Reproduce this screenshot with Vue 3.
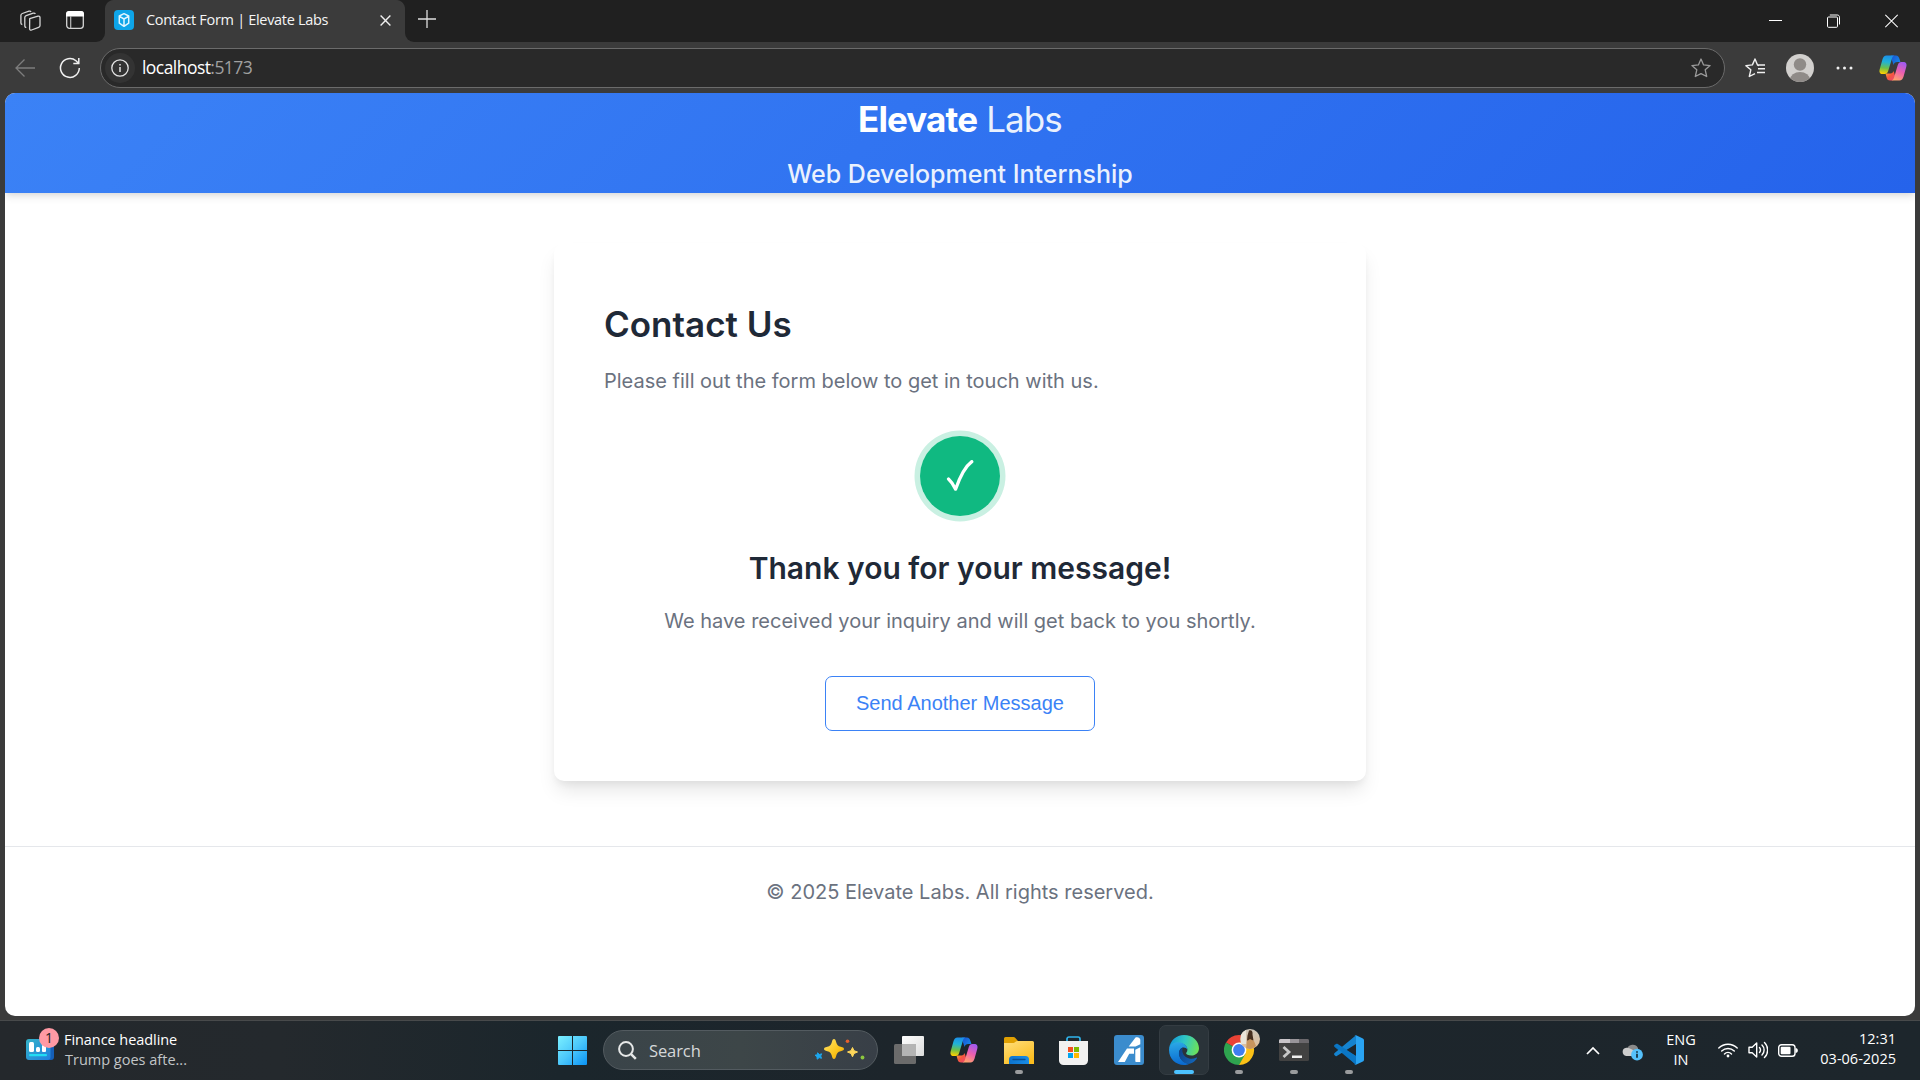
<script setup>
import { h } from 'vue'

const tray = { lang: ['ENG', 'IN'], clock: ['12:31', '03-06-2025'] }

const CopilotIcon = (props) => {
  const id = props.uid
  const stop = (offset, color) => h('stop', { offset, 'stop-color': color })
  const grad = (name, x1, y1, x2, y2, stops) =>
    h('linearGradient', { id: id + name, x1, y1, x2, y2 }, stops.map((s) => stop(s[0], s[1])))
  return h('svg', { width: 28, height: 26, viewBox: '0 0 28 26' }, [
    h('defs', [
      grad('a', 0.5, 0, 0.4, 1, [[0, '#1c8fe8'], [0.35, '#20b2d8'], [0.68, '#6cc04a'], [1, '#ffd000']]),
      grad('b', 0, 0, 1, 0.6, [[0, '#1b4fd0'], [1, '#1687e8']]),
      grad('c', 0.7, 0, 0.3, 1, [[0, '#a05af0'], [0.5, '#ec5fae'], [1, '#ffa36b']]),
      grad('d', 0, 0, 1, 1, [[0, '#ffb13a'], [0.5, '#f4553f'], [1, '#e8467c']])
    ]),
    h('path', { d: 'M12 .5h4.8c2.2 0 3 1.3 3.6 3.2l1 3.4h-3.2c-2 0-3 1-3.6 2.8L12.500 4z', fill: `url(#${id}b)` }),
    h('path', { d: 'M6.500 18.500h5c1.600 0 2.600-.9 3.100-2.500l1.900 6c-.7 2.300-1.600 3.500-3.700 3.500h-1.700c-2.200 0-3-1.300-3.500-3.100z', fill: `url(#${id}d)` }),
    h('path', { d: 'M7.500.5h8c-1.600.4-2.200 1.800-2.700 3.500l-3.600 12c-.6 1.900-1.700 3-3.500 3H3.600C.7 19 0 16.800.7 14.200L3.500 4.300C4.200 1.900 5.400.5 7.500.5z', fill: `url(#${id}a)` }),
    h('path', { d: 'M20.500 25.500h-8c1.600-.4 2.200-1.800 2.700-3.500l3.600-12c.6-1.900 1.700-3 3.500-3h2.100c2.900 0 3.600 2.200 2.900 4.800l-2.800 9.900c-.7 2.400-1.900 3.800-4 3.800z', fill: `url(#${id}c)` })
  ])
}
CopilotIcon.props = ['uid']
</script>

<template>
  <div class="screen">
    <div class="titlebar">
      <div class="corner">
        <svg class="ws" width="22" height="22" viewBox="0 0 22 22" fill="none" stroke="#d6d6d6" stroke-width="1.300" stroke-linejoin="round">
          <path d="M9.700 8.600 18 6.200c1.100-.3 2 .2 2 1.400v7.800c0 1-.5 1.600-1.400 1.900l-7 2.700c-1.100.4-2-.1-2-1.300z" />
          <path d="M6.300 17.300c-1 .1-1.500-.5-1.500-1.500V7.600c0-1 .5-1.600 1.400-1.900l7-2.500c1-.3 1.700-.1 2.200.7" />
          <path d="M2.300 14.500c-.9 0-1.400-.5-1.400-1.400V5.300c0-1 .5-1.500 1.400-1.800L9 1.200c1-.3 1.700 0 2.100.6" />
        </svg>
        <svg class="tabs-ic" width="18" height="18" viewBox="0 0 18 18">
          <rect x=".7" y=".7" width="16.600" height="16.600" rx="2.800" fill="none" stroke="#d6d6d6" stroke-width="1.300" />
          <path d="M0 5.500V3a3 3 0 0 1 3-3h12a3 3 0 0 1 3 3v2.500z" fill="#fff" />
          <path d="M4.700 5v12" stroke="#bbb" stroke-width="1.200" />
        </svg>
      </div>
      <div class="tab">
        <svg width="20" height="20" viewBox="0 0 20 20">
          <rect width="20" height="20" rx="4" fill="#0ea5e9" />
          <path d="M10 3.700 14.700 6v7.200L10 16.300l-4.700-3.100V6zM5.500 6.300 10 9l4.500-2.700M10 9v7" fill="none" stroke="#dff5ff" stroke-width="1.500" stroke-linejoin="round" />
        </svg>
        <span class="tab-title">Contact Form | Elevate Labs</span>
        <svg class="tab-x" width="11" height="11" viewBox="0 0 11 11"><path d="M.6.6l9.800 9.800M10.400.6.600 10.400" stroke="#f0f0f0" stroke-width="1.400" /></svg>
      </div>
      <svg class="plus" width="18" height="18" viewBox="0 0 18 18"><path d="M9 0v18M0 9h18" stroke="#dedede" stroke-width="1.300" /></svg>
      <div class="winctl">
        <svg width="13" height="14" viewBox="0 0 13 14"><path d="M0 6.500h13" stroke="#fff" /></svg>
        <svg width="13" height="14" viewBox="0 0 13 14" fill="none" stroke="#fff"><rect x=".5" y="3" width="10" height="10.300" rx="1" /><path d="M2.800 1h7.500c1.300 0 2.200.9 2.200 2.200v7.300" /></svg>
        <svg width="13" height="14" viewBox="0 0 13 14"><path d="M.3.800l12.400 12.400M12.700.800.3 13.200" stroke="#fff" stroke-width="1.100" /></svg>
      </div>
    </div>

    <div class="toolbar">
      <svg class="back" width="20" height="18" viewBox="0 0 20 18" fill="none" stroke="#7d7d7d" stroke-width="1.300"><path d="M20 9H1M9.500.5 1 9l8.500 8.500" /></svg>
      <svg class="reload" width="22" height="22" viewBox="0 0 22 22" fill="none" stroke="#f0f0f0" stroke-width="1.500"><path d="M20.300 11a9.400 9.400 0 1 1-3.300-7.200l2.500 2.400M19.800 1v5.500h-5.500" /></svg>
      <div class="address">
        <span class="info">
          <svg width="18" height="18" viewBox="0 0 18 18" fill="none" stroke="#e4e4e4" stroke-width="1.300"><circle cx="9" cy="9" r="8.200" /><path d="M9 8v5M9 5v1.500" stroke-width="1.500" /></svg>
        </span>
        <span class="url">localhost<i>:5173</i></span>
        <svg class="star" width="20" height="20" viewBox="0 0 20 20" fill="none" stroke="#9b9b9b" stroke-width="1.300" stroke-linejoin="round"><path d="M10 1l2.600 5.900 6.500.7-4.900 4.200 1.500 6.700L10 15.600l-5.700 2.900 1.500-6.700L.9 7.600l6.500-.7z" /></svg>
      </div>
      <svg class="fav" width="20" height="20" viewBox="0 0 20 20" fill="none" stroke="#f0f0f0" stroke-width="1.400" stroke-linejoin="round"><path d="M14 7.500 12.500 7 10 1 7.400 6.900.9 7.600l4.900 4.200-1.500 6.700 5.700-2.900M12.500 7H20M13 10.800h7M12 14.500h8" /></svg>
      <svg class="avatar" width="28" height="28" viewBox="0 0 28 28"><defs><clipPath id="av"><circle cx="14" cy="14" r="14" /></clipPath></defs><circle cx="14" cy="14" r="14" fill="#d2d0ce" /><circle cx="14" cy="10.500" r="6.200" fill="#8f8b88" /><ellipse cx="14" cy="26" rx="10" ry="8" fill="#8f8b88" clip-path="url(#av)" /></svg>
      <svg class="dots" width="17" height="4" viewBox="0 0 17 4" fill="#f0f0f0"><circle cx="2" cy="2" r="1.500" /><circle cx="8.500" cy="2" r="1.500" /><circle cx="15" cy="2" r="1.500" /></svg>
      <CopilotIcon uid="cpt" />
    </div>

    <div class="page">
      <header class="site-head">
        <h1><b>Elevate</b> <span>Labs</span></h1>
        <p>Web Development Internship</p>
      </header>
      <main class="card">
        <h2>Contact Us</h2>
        <p class="lead">Please fill out the form below to get in touch with us.</p>
        <div class="ok">
          <svg width="28" height="32" viewBox="0 0 28 32" fill="none" stroke="#fff" stroke-width="3.200" stroke-linecap="round" stroke-linejoin="round"><path d="M2.500 19c2.800 2.500 5 5.700 7.100 10.200C14 16.500 18.500 7 25.800 1.600" /></svg>
        </div>
        <h3>Thank you for your message!</h3>
        <p class="sub">We have received your inquiry and will get back to you shortly.</p>
        <button>Send Another Message</button>
      </main>
      <footer>© 2025 Elevate Labs. All rights reserved.</footer>
    </div>

    <div class="taskbar">
      <div class="news">
        <div class="news-ic">
          <svg width="28" height="21" viewBox="0 0 28 21">
            <defs><linearGradient id="nw" x2="1" y2="1"><stop stop-color="#35b3c8" /><stop offset="1" stop-color="#1f7fe0" /></linearGradient></defs>
            <path d="M20 3h8v15a3 3 0 0 1-3 3h-5z" fill="#155fb8" />
            <rect width="24.500" height="21" rx="3" fill="url(#nw)" />
            <rect x="3" y="3" width="5" height="10" rx="1.500" fill="#fff" /><rect x="10" y="8" width="4" height="5" rx="1.500" fill="#fff" /><rect x="16" y="6" width="4" height="7" rx="1" fill="#fff" />
            <rect x="3" y="15" width="18" height="2.200" rx="1" fill="#21dcf3" />
          </svg>
          <span class="badge">1</span>
        </div>
        <div class="news-tx"><div class="n1">Finance headline</div><div class="n2">Trump goes afte...</div></div>
      </div>

      <div class="apps">
        <svg class="start" width="29" height="29" viewBox="0 0 29 29">
          <defs><linearGradient id="wn" x1="0" y1="0" x2="29" y2="29" gradientUnits="userSpaceOnUse"><stop stop-color="#7bf0ff" /><stop offset=".5" stop-color="#4cc8fb" /><stop offset="1" stop-color="#0a93f5" /></linearGradient></defs>
          <path d="M1 0h13v14H0V1a1 1 0 0 1 1-1zM15 0h13a1 1 0 0 1 1 1v13H15zM0 15h14v14H1a1 1 0 0 1-1-1zM15 15h14v13a1 1 0 0 1-1 1H15z" fill="url(#wn)" />
        </svg>
        <div class="search">
          <svg width="19" height="19" viewBox="0 0 19 19" fill="none" stroke="#e6e8e8" stroke-width="2"><circle cx="8" cy="8" r="6.900" /><path d="M12.800 12.800l5 5" stroke-width="2.500" /></svg>
          <span>Search</span>
          <svg class="spark" width="52" height="24" viewBox="0 0 52 24">
            <defs><linearGradient id="st" x2="1" y2="1"><stop stop-color="#ffe36b" /><stop offset=".6" stop-color="#fbc51c" /><stop offset="1" stop-color="#e8a00a" /></linearGradient></defs>
            <path d="M20 1c1.200 0 1.600 1 2.200 3.200.8 2.900 1.700 3.900 4.500 4.600 2.200.5 3.300 1 3.300 2.200s-1.100 1.700-3.300 2.200c-2.800.7-3.700 1.700-4.500 4.600C21.600 20 21.200 21 20 21s-1.600-1-2.200-3.200c-.8-2.900-1.700-3.900-4.500-4.600C11.100 12.700 10 12.200 10 11s1.100-1.700 3.300-2.200c2.800-.7 3.700-1.700 4.500-4.600C18.400 2 18.800 1 20 1z" fill="url(#st)" />
            <path d="M38.500 9.500 40 12.700l3.500 1.300-3.500 1.500-1.500 3.300-1.500-3.300-3.500-1.500 3.500-1.300z" fill="#ffd75a" stroke="#ffd75a" stroke-linejoin="round" />
            <path d="M3.500 14.800l2 1.700 2.200-.7-1 2.200.8 2.300-2.300-.7-2 1.600-.2-2.500-2-1.500 2.300-.4z" fill="#1ba7ef" stroke="#1ba7ef" />
            <circle cx="33.500" cy="3.300" r="1.800" fill="#e8602c" /><circle cx="48.500" cy="19.500" r="1.900" fill="#8cc63f" />
          </svg>
        </div>

        <div class="app">
          <svg width="30" height="28" viewBox="0 0 30 28">
            <defs><linearGradient id="tv" x2="1" y2="1"><stop stop-color="#fff" /><stop offset="1" stop-color="#dcdcdc" /></linearGradient></defs>
            <rect x="8" width="22" height="20" rx="1" fill="url(#tv)" /><rect y="8" width="22" height="20" rx="1.500" fill="#6b6b6b" /><path d="M8 8h14v12H8z" fill="#b4b4b4" />
          </svg>
        </div>
        <div class="app"><CopilotIcon uid="cpb" /></div>
        <div class="app run">
          <svg width="30" height="27" viewBox="0 0 30 27">
            <defs><linearGradient id="fd" x2="0.600" y2="1"><stop stop-color="#ffdf7d" /><stop offset="1" stop-color="#fbbd1f" /></linearGradient><linearGradient id="fe" x2="1" y2="0"><stop stop-color="#0c74cf" /><stop offset="1" stop-color="#1a8ce4" /></linearGradient></defs>
            <path d="M0 8V1.500A1.500 1.500 0 0 1 1.500 0h8c.6 0 1 .2 1.400.6L14 4v4z" fill="#e0a002" />
            <path d="M0 6h9c1 0 1.500-.3 2-.8l.6-.5c.5-.5 1-.7 1.800-.7H28.500A1.500 1.500 0 0 1 30 5.500V27H0z" fill="url(#fd)" />
            <path d="M5 27v-4.500A3.500 3.500 0 0 1 8.500 19h13a3.500 3.500 0 0 1 3.500 3.500V27z" fill="url(#fe)" /><path d="M9 22.500h12" stroke="#0a4f93" stroke-width="1.300" stroke-linecap="round" />
          </svg>
        </div>
        <div class="app">
          <svg width="29" height="29" viewBox="0 0 29 29">
            <path d="M8 7V3a2 2 0 0 1 2-2h9a2 2 0 0 1 2 2v4" fill="none" stroke="#2fb4ec" stroke-width="1.700" />
            <path d="M0 5h29v19.500a4.500 4.500 0 0 1-4.500 4.500h-20A4.500 4.500 0 0 1 0 24.500z" fill="#f1f1f1" />
            <path d="M9 11h5v5H9z" fill="#f25022" /><path d="M15 11h5v5h-5z" fill="#7fba00" /><path d="M9 17h5v5H9z" fill="#00a4ef" /><path d="M15 17h5v5h-5z" fill="#ffb900" />
          </svg>
        </div>
        <div class="app">
          <svg width="30" height="30" viewBox="0 0 30 30">
            <rect width="30" height="30" rx="3" fill="#3b8ccd" />
            <path d="M21.500 2.500c2.200-1 4.800.2 4.800 2.600v4.200l-4.800 2.200H14.700z" fill="#fff" />
            <path d="M13 13.500h7v5.200h-4.800L10.800 27H4z" fill="#fff" />
            <path d="M21.300 14.700l5-2.500V27h-4.200c-.5 0-.8-.3-.8-.8z" fill="#fff" />
          </svg>
        </div>
        <div class="app active">
          <svg width="30" height="30" viewBox="0 0 30 30">
            <defs>
              <linearGradient id="e1" x1="0" y1=".3" x2="1" y2=".5"><stop stop-color="#1296dc" /><stop offset=".5" stop-color="#30c7c4" /><stop offset="1" stop-color="#6ce05a" /></linearGradient>
              <linearGradient id="e2" x1=".3" y1="0" x2=".4" y2="1"><stop stop-color="#2ba8e6" /><stop offset="1" stop-color="#0a6ad0" /></linearGradient>
              <linearGradient id="e3" x1="0" y1="0" x2="1" y2=".6"><stop stop-color="#0d3f86" /><stop offset="1" stop-color="#1263b5" /></linearGradient>
            </defs>
            <path d="M.1 13.800C1 5.500 7.300 0 15 0c8.800 0 15 6.300 15 13.200 0 4.200-3.300 7.300-7.500 7.300-3.500 0-5.400-1.200-5.400-2.200 0-.7 1.300-1.200 1.300-3.500C18.400 10.500 14 8 9.500 8 5.200 8 1.800 10 .1 13.800z" fill="url(#e1)" />
            <path d="M.1 13.800C1 9.500 4.500 7.200 9.300 7.200c5 0 9.100 3.300 9.100 7.200-1-1.500-3-2.300-4.600-1.800-3 .8-4.300 4-3.500 7.600 1 4.600 5 8 10 8.500C18.500 29.700 17 30 15 30 6 30-.7 22.500.1 13.800z" fill="url(#e2)" />
            <path d="M13.800 12.600c-3 1.300-4.400 4.300-3.600 8 1.100 4.900 6 9.200 11.200 7.900 2.600-.9 4.800-2.600 6.300-4.800.6-.9 0-1.400-.8-1-2 1-4.500 1.300-6.700.8-4.900-1.100-8.200-5.900-6.400-10.900z" fill="url(#e3)" />
          </svg>
        </div>
        <div class="app run chrome">
          <svg width="37" height="37" viewBox="0 0 37 37">
            <defs><clipPath id="ph"><circle cx="26" cy="10" r="10" /></clipPath><linearGradient id="sk" x2="0" y2="1"><stop stop-color="#cfc8bd" /><stop offset="1" stop-color="#e0bd96" /></linearGradient></defs>
            <path d="M15 21 2 13.500a15 15 0 0 1 26 0z" fill="#e94235" />
            <path d="M15 21 2 13.500A15 15 0 0 0 15 36l7.500-11z" fill="#2ea44f" />
            <path d="M15 13.500h13A15 15 0 0 1 15 36l6.500-11.200z" fill="#fbc116" />
            <circle cx="15" cy="21" r="7.400" fill="#fff" /><circle cx="15" cy="21" r="5.900" fill="#3f7ef0" />
            <circle cx="26" cy="10" r="10" fill="url(#sk)" />
            <g clip-path="url(#ph)"><path d="M17 0h5v15h-5z" fill="#e9e4d9" /><path d="M25 1.500c2.500-1 4 1 3.500 4l1 6-4 1-2.500-1 .5-5z" fill="#47301f" /><path d="M23 12l3-2 4 2 2 5-4 3h-6z" fill="#c8955e" /></g>
          </svg>
        </div>
        <div class="app run">
          <svg width="30" height="22" viewBox="0 0 30 22">
            <rect width="30" height="22" rx="1.500" fill="#424242" /><path d="M0 4V1.500A1.500 1.500 0 0 1 1.500 0H11v4z" fill="#c9c5c9" /><path d="M11 0h9v4h-9z" fill="#99959a" /><path d="M20 0h8.500A1.500 1.500 0 0 1 30 1.500V4H20z" fill="#6b686c" />
            <path d="M4.500 8l5.500 5-5.500 5" fill="none" stroke="#c8c8c8" stroke-width="2.800" /><path d="M13 16.500h10v2.500H13z" fill="#efefef" />
          </svg>
        </div>
        <div class="app run">
          <svg width="30" height="30" viewBox="0 0 30 30">
            <path d="M1 9.400.500 10.100c-.6.700-.5 1.500.1 2L22 29.700V21z" fill="#0a71bd" />
            <path d="M1 20.600.400 20c-.5-.7-.4-1.600.2-2.100L22 .2V9L2.800 20.900c-.7.400-1.300.3-1.800-.3z" fill="#1583cf" />
            <path d="M.5 10.200 2 9c.6-.4 1.200-.4 1.800 0L22 21v8.700z" fill="#0b76c4" />
            <path d="M21.900 29.700c-.6.300-1.100.4-1.700 0 .9.400 1.800-.2 1.800-1.300V1.600C22 .6 21.200 0 20.300.4c.5-.4 1.100-.5 1.800-.2l6.800 3.200c.7.4 1.100 1 1.100 1.800v19.600c0 .8-.4 1.500-1.100 1.800z" fill="#29a3f2" />
          </svg>
        </div>
      </div>

      <div class="tray">
        <svg class="chev" width="14" height="9" viewBox="0 0 14 9"><path d="M1 8l6-6 6 6" fill="none" stroke="#fff" stroke-width="1.700" /></svg>
        <svg class="cloud" width="21" height="18" viewBox="0 0 21 18">
          <path d="M5 6a6 6 0 0 1 11-1l1 7H5z" fill="#8b8b8b" /><path d="M4.200 13a4.200 4.200 0 0 1 0-8.300c3.300-.5 6.600 2 9.800 4.300L10 13z" fill="#cdcdcd" />
          <circle cx="15" cy="11.700" r="5.900" fill="#55c1fb" /><path d="M15 10.800v4M15 8.200v1.500" stroke="#10242e" stroke-width="1.600" />
        </svg>
        <div class="two lang"><div v-for="l in tray.lang" :key="l">{{ l }}</div></div>
        <svg class="wifi" width="20" height="16" viewBox="0 0 20 16" fill="none" stroke="#fff" stroke-width="1.400" stroke-linecap="round"><path d="M.8 6.100a13 13 0 0 1 18.400 0M3.700 9.100a9 9 0 0 1 12.600 0M6.500 11.900a5 5 0 0 1 7 0" /><circle cx="10" cy="14" r="1.400" fill="#fff" stroke="none" /></svg>
        <svg class="vol" width="20" height="18" viewBox="0 0 20 18" fill="none" stroke="#fff" stroke-width="1.400" stroke-linecap="round" stroke-linejoin="round"><path d="M1 6.200h3.200L8.700 2v14l-4.500-4.200H1z" /><path d="M11.500 6.500a4 4 0 0 1 0 5M14 4a7 7 0 0 1 0 10M16.500 1.500a10.500 10.500 0 0 1 0 15" /></svg>
        <svg class="batt" width="20" height="13" viewBox="0 0 20 13"><rect x=".7" y=".7" width="16.300" height="11.600" rx="2.800" fill="none" stroke="#fff" stroke-width="1.400" /><rect x="2.700" y="2.700" width="9.800" height="7.600" rx="1" fill="#fff" /><path d="M17.500 4.200c1.600 0 2.300.5 2.300 2.300s-.7 2.300-2.300 2.300z" fill="#fff" /></svg>
        <div class="two clock"><div v-for="l in tray.clock" :key="l">{{ l }}</div></div>
      </div>
    </div>
  </div>
</template>

<style>
body { background: #3b3b3b; overflow: hidden; }
</style>

<style scoped>
.screen { width: 1920px; height: 1080px; display: flex; flex-direction: column; background: #3b3b3b; font-family: "Open Sans", "Noto Sans", sans-serif; overflow: hidden; }
svg { display: block; flex: none; }
h1, h2, h3, p { margin: 0; }

.titlebar { height: 43px; flex: none; display: flex; background: #3b3b3b; }
.corner { box-sizing: border-box; width: 105px; height: 42px; background: #202020; border-bottom-right-radius: 9px; display: flex; align-items: flex-start; padding: 10px 0 0 20px; }
.tabs-ic { margin: 1px 0 0 24px; }
.tab { box-sizing: border-box; width: 300px; height: 43px; display: flex; align-items: center; padding: 0 14px 3px 9px; background: radial-gradient(circle at 100% 100%, #3b3b3b 8.500px, #202020 9.500px) 0 0 / 9px 9px no-repeat, radial-gradient(circle at 0 100%, #3b3b3b 8.500px, #202020 9.500px) 100% 0 / 9px 9px no-repeat, #3b3b3b; }
.tab-title { margin-left: 12px; font-size: 14.500px; letter-spacing: -0.310px; color: #f5f5f5; flex: 1; white-space: nowrap; line-height: 20px; }
.plus { margin: 0; padding: 10px 0 14px 13px; background: #202020; height: 18px; border-bottom-left-radius: 9px; box-sizing: content-box; }
.winctl { flex: 1; height: 42px; background: #202020; display: flex; justify-content: flex-end; align-items: center; gap: 45px; padding-right: 22px; }

.toolbar { height: 50px; flex: none; display: flex; align-items: center; }
.back { margin-left: 15px; }
.reload { margin-left: 24px; }
.address { box-sizing: border-box; width: 1625px; height: 40px; margin-left: 19px; border: 1px solid #6b6b6b; border-radius: 20px; background: #292929; display: flex; align-items: center; padding: 0 13px 0 4px; }
.info { width: 30px; height: 30px; border-radius: 50%; background: #333; display: flex; align-items: center; justify-content: center; }
.url { flex: 1; margin-left: 7px; font-size: 17.500px; letter-spacing: -0.550px; color: #fff; line-height: 24px; margin-top: -3px; }
.url i { font-style: normal; color: #a0a0a0; }
.fav { margin-left: 20px; }
.avatar { margin-left: 21px; }
.dots { margin: 0 26px 0 22px; }

.page { width: 1910px; height: 923px; margin-left: 5px; background: #fff; border-radius: 10px; overflow: hidden; font-family: Inter, sans-serif; flex: none; }
.site-head { height: 100px; background: linear-gradient(135deg, #3b82f6, #2563eb); text-align: center; color: #fff; box-shadow: 0 5px 7.500px -1px rgba(0, 0, 0, .1), 0 2px 5px -1px rgba(0, 0, 0, .06); }
.site-head h1 { font-size: 35px; line-height: 52px; letter-spacing: -0.875px; font-weight: 400; }
.site-head b { font-weight: 700; }
.site-head span { opacity: .9; }
.site-head p { margin-top: 10px; font-size: 25px; line-height: 38px; font-weight: 500; opacity: .9; }
.card { box-sizing: border-box; width: 812px; height: 538px; margin: 50px auto 0; padding: 50px; border-radius: 10px; background: #fff; box-shadow: 0 12.500px 18.750px -3.750px rgba(0, 0, 0, .1), 0 5px 7.500px -2.500px rgba(0, 0, 0, .05); display: flex; flex-direction: column; align-items: center; }
.card h2 { align-self: flex-start; font-size: 35px; line-height: 62px; font-weight: 600; color: #1f2937; }
.lead, .sub { font-size: 20px; line-height: 32px; color: #6b7280; white-space: nowrap; }
.lead { align-self: flex-start; margin-top: 10px; }
.ok { width: 80px; height: 80px; margin-top: 39px; border-radius: 50%; background: #10b981; box-shadow: 0 0 0 5.500px #c9f0e2; display: flex; align-items: center; justify-content: center; flex: none; }
.card h3 { margin-top: 28px; font-size: 30px; line-height: 48px; font-weight: 600; color: #1f2937; }
.sub { margin-top: 13px; }
.card button { box-sizing: border-box; width: 270px; height: 55px; flex: none; margin-top: 39px; border: 1px solid #3b82f6; border-radius: 7px; background: #fff; color: #3b82f6; font: 20px "Liberation Sans", sans-serif; padding: 0; white-space: nowrap; }
footer { margin-top: 65px; padding-top: 29px; border-top: 1px solid #e5e7eb; text-align: center; font-size: 20px; line-height: 32px; color: #6b7280; }

.taskbar { box-sizing: border-box; height: 60px; margin-top: 4px; border-top: 1px solid #484a4b; background: linear-gradient(90deg, #24282c 0, #24292d 280px, #1b262c 560px, #1d252b 900px, #1d262c 100%); display: flex; flex: none; }
.news { width: 558px; display: flex; padding-top: 7px; box-sizing: border-box; }
.news-ic { position: relative; margin: 11px 0 0 26px; width: 28px; height: 21px; }
.badge { position: absolute; left: 13px; top: -11px; width: 20px; height: 20px; border-radius: 50%; background: #ff99a4; color: #222; font-size: 14px; line-height: 20px; text-align: center; }
.news-tx { margin-left: 10px; font-size: 14.500px; line-height: 20px; letter-spacing: -0.060px; margin-top: 2px; }
.n1 { color: #fff; }
.n2 { color: #c2c5c7; padding-left: 1px; letter-spacing: 0; }
.apps { display: flex; align-items: center; height: 58px; }
.search { box-sizing: border-box; width: 275px; height: 40px; margin: 0 3px 0 16px; border: 1px solid #535b60; border-radius: 20px; background: linear-gradient(90deg, #3a4449, #3d4648 50%, #383f47); display: flex; align-items: center; padding: 0 11px 0 14px; }
.search span { margin: 1px 0 0 12px; flex: 1; font-size: 16.500px; color: #d5d8d9; letter-spacing: -0.100px; line-height: 22px; }
.app { width: 50px; height: 50px; margin: 0 2.500px; position: relative; display: flex; align-items: center; justify-content: center; box-sizing: border-box; border-radius: 7px; }
.active { background: #2a3339; border: 1px solid #343c42; }
.run::after, .active::after { content: ""; position: absolute; left: 50%; bottom: 1px; width: 8px; height: 4px; margin-left: -4px; border-radius: 2px; background: #9a9c9e; }
.active::after { width: 20px; margin-left: -10px; bottom: 0; background: #4cc2ff; }
.chrome svg { margin: -5px 0 0 7px; }
.tray { flex: 1; display: flex; align-items: center; justify-content: flex-end; height: 58px; padding-right: 24px; color: #fff; }
.two { font-size: 14.500px; line-height: 20px; letter-spacing: 0; margin-top: 0; }
.cloud { margin-left: 22px; margin-top: 4px; }
.lang { width: 40px; margin-left: 18px; text-align: center; }
.wifi { margin-left: 17px; }
.vol { margin-left: 10px; }
.batt { margin-left: 10px; }
.clock { width: 81px; margin-left: 17px; text-align: right; white-space: nowrap; margin-top: -2px; }
</style>
